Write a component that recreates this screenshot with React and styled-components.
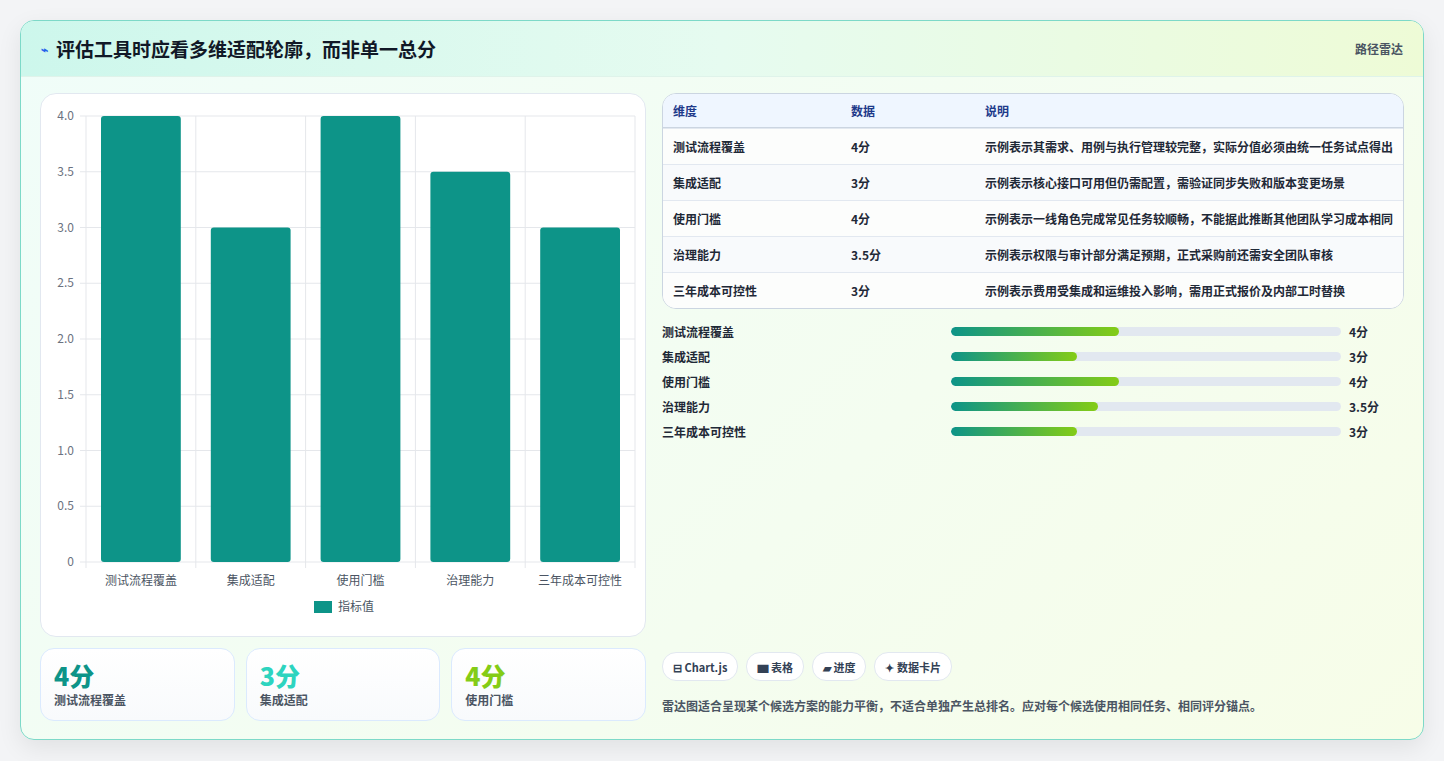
import React from "react";
import styled, { createGlobalStyle } from "styled-components";

const G = createGlobalStyle`
  body{margin:0;background:#f3f4f6;font-family:"Noto Sans CJK SC","Noto Sans",sans-serif;}
`;
const Page = styled.div`padding:20px;height:761px;box-sizing:border-box;`;
const Card = styled.div`border:1px solid #7dd9c8;border-radius:14px;overflow:hidden;height:720px;box-sizing:border-box;
  background:linear-gradient(135deg,#f0fdf9 0%,#f4fdf0 60%,#f7fde8 100%);box-shadow:0 8px 24px rgba(0,0,0,.08);display:flex;flex-direction:column;`;
const Header = styled.div`height:55px;flex:none;display:flex;align-items:center;justify-content:space-between;padding:0 20px;
  background:linear-gradient(90deg,#cdf7ec 0%,#e6fbf0 50%,#eefbd6 100%);border-bottom:1px solid #dff3ea;`;
const Title = styled.h1`margin:0;font-size:19px;font-weight:700;color:#111827;display:flex;align-items:center;gap:8px;`;
const Icon = styled.span`color:#2563eb;font-size:12px;`;
const Tag = styled.span`font-size:12px;color:#4b5563;font-weight:600;`;
const Body = styled.div`flex:1;display:grid;grid-template-columns:606px 1fr;gap:16px;padding:16px 19px 19px 19px;`;
const Col = styled.div`display:flex;flex-direction:column;gap:11px;`;
const ChartCard = styled.div`background:#fff;border:1px solid #e2e8f0;border-radius:16px;height:544px;box-sizing:border-box;`;
const Stats = styled.div`display:grid;grid-template-columns:repeat(3,1fr);gap:11px;`;
const Stat = styled.div`border:1px solid #dbeafe;border-radius:14px;background:linear-gradient(180deg,#fff,#f8fafc);height:73px;box-sizing:border-box;padding:10px 13px;`;
const StatVal = styled.div`font-size:25px;font-weight:800;color:${p=>p.c};line-height:32px;`;
const StatLbl = styled.div`font-size:12px;color:#4b5563;font-weight:600;`;
const Table = styled.div`border:1px solid #cbd5e1;border-radius:14px;overflow:hidden;background:#fff;`;
const Row = styled.div`display:grid;grid-template-columns:178px 134px 1fr;height:${p=>p.h?33:35}px;align-items:center;padding-left:10px;
  font-size:12px;font-weight:${p=>p.h?700:600};color:${p=>p.h?"#1e3a8a":"#1f2937"};
  background:${p=>p.h?"#eff6ff":p.alt?"#f8fafc":"#fcfdfc"};border-top:${p=>p.first?"none":"1px solid #e2e8f0"};
  ${p=>p.h?"border-bottom:1px solid #cbd5e1;":""} white-space:nowrap;overflow:hidden;`;
const Bars = styled.div`display:flex;flex-direction:column;gap:7px;margin-top:3px;`;
const BarRow = styled.div`display:grid;grid-template-columns:281px 390px 1fr;gap:8px;align-items:center;height:18px;font-size:12px;font-weight:600;color:#1f2937;`;
const Track = styled.div`height:9px;border-radius:5px;background:#e2e8f0;overflow:hidden;`;
const Fill = styled.div`height:100%;border-radius:5px;background:linear-gradient(90deg,#0d9488,#84cc16);`;
const Spacer = styled.div`flex:1;`;
const Chips = styled.div`display:flex;gap:8px;`;
const Chip = styled.span`border:1px solid #e2e8f0;border-radius:14px;background:#fff;padding:0 10px;height:27px;display:flex;align-items:center;gap:4px;font-size:11px;font-weight:700;color:#334155;`;
const Note = styled.p`margin:6px 0 7px;font-size:12px;font-weight:600;color:#4b5563;`;

const data=[["测试流程覆盖",4,"示例表示其需求、用例与执行管理较完整，实际分值必须由统一任务试点得出"],
["集成适配",3,"示例表示核心接口可用但仍需配置，需验证同步失败和版本变更场景"],
["使用门槛",4,"示例表示一线角色完成常见任务较顺畅，不能据此推断其他团队学习成本相同"],
["治理能力",3.5,"示例表示权限与审计部分满足预期，正式采购前还需安全团队审核"],
["三年成本可控性",3,"示例表示费用受集成和运维投入影响，需用正式报价及内部工时替换"]];

function Chart(){
  const x0=45,x1=594,yT=22,yB=468; const cw=(x1-x0)/5;
  const y=v=>yB-(v/4)*(yB-yT);
  const ticks=[0,0.5,1,1.5,2,2.5,3,3.5,4];
  return <svg width="606" height="542" style={{display:"block"}} fontFamily="Noto Sans CJK SC,sans-serif">
    {ticks.map(t=><g key={t}><line x1={x0-6} x2={x1} y1={y(t)} y2={y(t)} stroke="#e5e7eb"/>
      <text x={x0-12} y={y(t)+4} fontSize="12" fill="#6b7280" textAnchor="end">{t===0?"0":t.toFixed(1)}</text></g>)}
    {[0,1,2,3,4,5].map(i=><line key={i} x1={x0+i*cw} x2={x0+i*cw} y1={yT} y2={yB+6} stroke="#e5e7eb"/>)}
    {data.map((d,i)=><g key={i}><rect x={x0+i*cw+15} y={y(d[1])} width={cw-30} height={yB-y(d[1])} rx="3" fill="#0d9488"/>
      <text x={x0+i*cw+cw/2} y={yB+23} fontSize="12" fill="#4b5563" textAnchor="middle">{d[0]}</text></g>)}
    <rect x="273" y="507" width="18" height="12" fill="#0d9488"/>
    <text x="297" y="517" fontSize="12" fill="#4b5563">指标值</text>
  </svg>;
}

export default function App(){
  return <><G/><Page><Card>
    <Header><Title><Icon>⌁</Icon>评估工具时应看多维适配轮廓，而非单一总分</Title><Tag>路径雷达</Tag></Header>
    <Body>
      <Col>
        <ChartCard><Chart/></ChartCard>
        <Stats>
          <Stat><StatVal c="#0d9488">4分</StatVal><StatLbl>测试流程覆盖</StatLbl></Stat>
          <Stat><StatVal c="#2dd4bf">3分</StatVal><StatLbl>集成适配</StatLbl></Stat>
          <Stat><StatVal c="#84cc16">4分</StatVal><StatLbl>使用门槛</StatLbl></Stat>
        </Stats>
      </Col>
      <Col style={{gap:10}}>
        <Table>
          <Row h first><span>维度</span><span>数据</span><span>说明</span></Row>
          {data.map((d,i)=><Row key={i} alt={i%2===1}><span>{d[0]}</span><span>{d[1]}分</span><span>{d[2]}</span></Row>)}
        </Table>
        <Bars>
          {data.map((d,i)=><BarRow key={i}><span>{d[0]}</span><Track><Fill style={{width:`${d[1]*10.8}%`}}/></Track><span>{d[1]}分</span></BarRow>)}
        </Bars>
        <Spacer/>
        <Chips><Chip>⊟ Chart.js</Chip><Chip>▆ 表格</Chip><Chip>▰ 进度</Chip><Chip>✦ 数据卡片</Chip></Chips>
        <Note>雷达图适合呈现某个候选方案的能力平衡，不适合单独产生总排名。应对每个候选使用相同任务、相同评分锚点。</Note>
      </Col>
    </Body>
  </Card></Page></>;
}
